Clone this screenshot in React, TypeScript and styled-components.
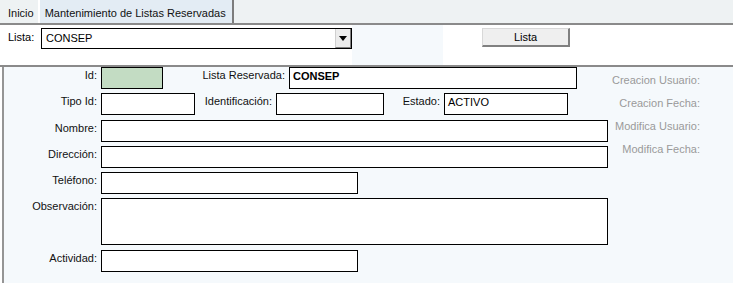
import React from "react";
import styled, { createGlobalStyle } from "styled-components";

const Global = createGlobalStyle`
  html, body { margin: 0; padding: 0; background: #ffffff; }
  body { font-family: "Liberation Sans", Arial, sans-serif; font-size: 11px; color: #000; }
  * { box-sizing: border-box; }
`;

const Page = styled.div`
  width: 733px;
  height: 283px;
  overflow: hidden;
  display: flex;
  flex-direction: column;
`;

const TabBar = styled.div`
  height: 25px;
  flex: none;
  display: flex;
  align-items: stretch;
  background: #eef2f3;
  border-bottom: 2px solid #8a8a8a;
`;

const Tab = styled.div<{ $active?: boolean }>`
  display: flex;
  align-items: center;
  padding: 2px ${(p) => (p.$active ? "6px" : "4px")} 0 ${(p) => (p.$active ? "5px" : "8px")};
  background: ${(p) => (p.$active ? "#e3ecf4" : "#eef2f3")};
  border-right: ${(p) => (p.$active ? "2px solid #7d7d7d" : "2px solid #ffffff")};
  font-size: 11px;
  color: #111;
  white-space: nowrap;
`;

const TopSection = styled.div`
  height: 42px;
  flex: none;
  display: flex;
  align-items: flex-start;
  padding: 3px 0 0 8px;
  background: linear-gradient(to right, #ffffff 0, #ffffff 352px, #f5f9fc 352px, #f5f9fc 443px, #ffffff 443px);
  border-bottom: 2px solid #8a8a8a;
`;

const TopLabel = styled.span`
  line-height: 19px;
  width: 33px;
`;

const SelectBox = styled.div`
  width: 311px;
  height: 21px;
  border: 1px solid #000;
  background: #fff;
  display: flex;
  align-items: stretch;
`;

const SelectValue = styled.span`
  flex: 1;
  padding: 1px 0 0 4px;
  line-height: 16px;
`;

const SelectArrow = styled.span`
  width: 16px;
  background: #ececec;
  border-left: 1px solid #d0d0d0;
  border-bottom: 1px solid #808080;
  border-right: 1px solid #808080;
  display: flex;
  align-items: center;
  justify-content: center;
`;

const ButtonWrap = styled.div`
  margin-left: 130px;
`;

const Button = styled.button`
  width: 88px;
  height: 19px;
  background: #efefef;
  border: 1px solid #d8d8d8;
  border-right: 2px solid #808080;
  border-bottom: 2px solid #808080;
  font-family: "Liberation Sans", Arial, sans-serif;
  font-size: 11px;
  padding: 0;
  line-height: 14px;
  color: #000;
`;

const Panel = styled.div`
  flex: 1;
  margin-left: 2px;
  border-left: 2px solid #959595;
  background: #f5f9fc;
  display: flex;
  padding-top: 0;
`;

const Form = styled.div`
  width: 606px;
  display: flex;
  flex-direction: column;
  gap: 4.25px;
`;

const Row = styled.div`
  display: flex;
  align-items: flex-start;
`;

const Label = styled.span<{ $w: number }>`
  width: ${(p) => p.$w}px;
  padding-right: 4px;
  text-align: right;
  line-height: 17px;
  white-space: nowrap;
  color: #111;
`;

const Field = styled.div<{ $w: number; $h?: number; $green?: boolean; $bold?: boolean }>`
  width: ${(p) => p.$w}px;
  height: ${(p) => p.$h ?? 22}px;
  border: 1.5px solid #000;
  background: ${(p) => (p.$green ? "#c3dcc3" : "#ffffff")};
  padding: 0 0 0 3px;
  line-height: 16px;
  font-weight: ${(p) => (p.$bold ? "bold" : "normal")};
`;

const Meta = styled.div`
  flex: 1;
  display: flex;
  flex-direction: column;
  align-items: flex-end;
  padding: 6px 33px 0 0;
  gap: 9px;
`;

const MetaLabel = styled.span`
  font-size: 11px;
  color: #9a9a9a;
  line-height: 14px;
`;

const Arrow = () => (
  <svg width="8" height="5" viewBox="0 0 8 5">
    <path d="M0 0 H8 L4 5 Z" fill="#000" />
  </svg>
);

export default function App() {
  return (
    <Page>
      <Global />
      <TabBar>
        <Tab>Inicio</Tab>
        <Tab $active>Mantenimiento de Listas Reservadas</Tab>
      </TabBar>
      <TopSection>
        <TopLabel>Lista:</TopLabel>
        <SelectBox>
          <SelectValue>CONSEP</SelectValue>
          <SelectArrow>
            <Arrow />
          </SelectArrow>
        </SelectBox>
        <ButtonWrap>
          <Button>Lista</Button>
        </ButtonWrap>
      </TopSection>
      <Panel>
        <Form>
          <Row>
            <Label $w={97}>Id:</Label>
            <Field $w={62} $green />
            <Label $w={126}>Lista Reservada:</Label>
            <Field $w={288} $bold>CONSEP</Field>
          </Row>
          <Row>
            <Label $w={97}>Tipo Id:</Label>
            <Field $w={94} />
            <Label $w={81}>Identificación:</Label>
            <Field $w={108} />
            <Label $w={60}>Estado:</Label>
            <Field $w={124}>ACTIVO</Field>
          </Row>
          <Row>
            <Label $w={97}>Nombre:</Label>
            <Field $w={507} />
          </Row>
          <Row>
            <Label $w={97}>Dirección:</Label>
            <Field $w={507} />
          </Row>
          <Row>
            <Label $w={97}>Teléfono:</Label>
            <Field $w={257} />
          </Row>
          <Row>
            <Label $w={97}>Observación:</Label>
            <Field $w={507} $h={47} />
          </Row>
          <Row>
            <Label $w={97}>Actividad:</Label>
            <Field $w={257} />
          </Row>
        </Form>
        <Meta>
          <MetaLabel>Creacion Usuario:</MetaLabel>
          <MetaLabel>Creacion Fecha:</MetaLabel>
          <MetaLabel>Modifica Usuario:</MetaLabel>
          <MetaLabel>Modifica Fecha:</MetaLabel>
        </Meta>
      </Panel>
    </Page>
  );
}
